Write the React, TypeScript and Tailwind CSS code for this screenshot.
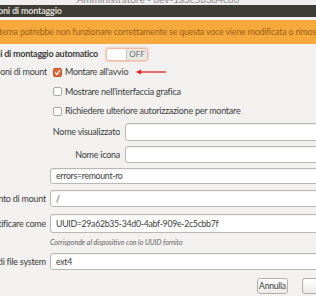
import React from "react";

// Mount options dialog (cropped view)
const font = { fontFamily: 'Lato, "Noto Sans", sans-serif' };

function Label({ text, w, bold }: { text: string; w: string; bold?: boolean }) {
  return (
    <div className={`${w} shrink-0 flex justify-end overflow-hidden`}>
      <span className={`shrink-0 whitespace-nowrap text-[9px] tracking-[-0.25px] text-[#3c3c3c] ${bold ? "font-bold" : ""}`}>
        {text}
      </span>
    </div>
  );
}

function Field({ value, h = "h-[17px]" }: { value?: string; h?: string }) {
  return (
    <div
      className={`flex-1 min-w-0 ${h} mr-[-20px] bg-white border border-[#b9b7b3] rounded-[3px] flex items-center pl-[5px] text-[8.75px] tracking-[-0.3px] text-[#3c3c3c] whitespace-nowrap shadow-[inset_0_1px_1px_rgba(0,0,0,0.06)]`}
    >
      {value}
    </div>
  );
}

function Check({ checked, label, arrow }: { checked?: boolean; label: string; arrow?: boolean }) {
  return (
    <div className="flex items-center gap-[3px] h-[16px]">
      <div
        className={`w-[9px] h-[9px] rounded-[2px] border flex items-center justify-center ${
          checked ? "bg-[#e0693c] border-[#c4532a]" : "bg-white border-[#a9a7a3]"
        }`}
      >
        {checked && (
          <svg width="7" height="7" viewBox="0 0 7 7">
            <path d="M1 3.6 L2.8 5.3 L6 1.4" stroke="white" strokeWidth="1.3" fill="none" />
          </svg>
        )}
      </div>
      <span className="text-[9px] tracking-[-0.25px] text-[#3c3c3c] whitespace-nowrap">{label}</span>
      {arrow && (
        <svg width="32" height="8" viewBox="0 0 32 8" className="ml-[4px]">
          <path d="M2 4 H31" stroke="#e52420" strokeWidth="1.3" />
          <path d="M1 4 L6 1.5 L6 6.5 Z" fill="#e52420" />
        </svg>
      )}
    </div>
  );
}

export default function App() {
  return (
    <div className="w-[316px] h-[296px] overflow-hidden bg-[#f2f1f0] flex flex-col" style={font}>
      {/* cut window above */}
      <div className="h-[5px] bg-[#efeeec] overflow-hidden flex justify-center">
        <span className="text-[10px] leading-[10px] mt-[-6px] text-[#8a8a8a] whitespace-nowrap">Amministratore - dev-1a3c5b3d4cd0</span>
      </div>
      {/* title bar */}
      <div className="h-[12px] bg-[#3d3c37] flex items-center">
        <span className="ml-[-2px] text-[9px] tracking-[-0.2px] font-bold text-[#dfdbd2] whitespace-nowrap">oni di montaggio</span>
      </div>
      <div className="h-[3px]" />
      {/* warning */}
      <div className="h-[24px] bg-[#f5a93d] flex items-center overflow-hidden">
        <span className="ml-[-1px] text-[9px] tracking-[-0.25px] text-[#a15f13] whitespace-nowrap">
          tema potrebbe non funzionare correttamente se questa voce viene modificata o rimossa.
        </span>
      </div>

      <div className="flex flex-col pt-[3px]">
        {/* automatic */}
        <div className="flex items-center h-[14px]">
          <Label text="Opzioni di montaggio automatico" w="w-[98px]" bold />
          <div className="ml-[8px] w-[42px] h-[13px] rounded-[3px] border border-[#f0b9a2] shadow-[0_0_1px_1px_rgba(240,150,110,0.35)] flex overflow-hidden">
            <div className="w-[20px] bg-white border-r border-[#c9c7c3] rounded-[2px]" />
            <div className="flex-1 bg-[#e9e8e5] flex items-center justify-center text-[8px] text-[#6a6a6a]">OFF</div>
          </div>
        </div>

        {/* checks */}
        <div className="flex mt-[3px]">
          <div className="pt-[1px]">
            <Label text="Opzioni di mount" w="w-[47px]" />
          </div>
          <div className="ml-[6px] flex flex-col gap-[3.5px]">
            <Check checked label="Montare all'avvio" arrow />
            <Check label="Mostrare nell'interfaccia grafica" />
            <Check label="Richiedere ulteriore autorizzazione per montare" />
          </div>
        </div>

        {/* names */}
        <div className="flex items-center mt-[4px] gap-[5px]">
          <Label text="Nome visualizzato" w="w-[120px]" />
          <Field h="h-[18px]" />
        </div>
        <div className="flex items-center mt-[5px] gap-[5px]">
          <Label text="Nome icona" w="w-[120px]" />
          <Field />
        </div>
        <div className="flex items-center mt-[5px] pl-[50px]">
          <Field value="errors=remount-ro" h="h-[16px]" />
        </div>

        <div className="flex items-center mt-[6px] gap-[4px]">
          <Label text="Punto di mount" w="w-[46px]" />
          <Field value="/" />
        </div>
        <div className="flex items-center mt-[7px] gap-[4px]">
          <Label text="Identificare come" w="w-[46px]" />
          <Field value="UUID=29a62b35-34d0-4abf-909e-2c5cbb7f" h="h-[19px]" />
        </div>
        <div className="pl-[50px] mt-[4px] h-[11px] flex items-center text-[7px] italic text-[#5f5f5f] whitespace-nowrap">
          Corrisponde al dispositivo con lo UUID fornito
        </div>
        <div className="flex items-center mt-[5px] gap-[4px]">
          <Label text="Tipo di file system" w="w-[46px]" />
          <Field value="ext4" />
        </div>

        {/* buttons */}
        <div className="flex justify-end mt-[8px] gap-[14px] mr-[-16px]">
          <div className="w-[31px] h-[16px] rounded-[3px] border border-[#b1afab] bg-gradient-to-b from-white to-[#ecebe9] flex items-center justify-center text-[8.5px] tracking-[-0.2px] text-[#3c3c3c]">
            Annulla
          </div>
          <div className="w-[30px] h-[16px] rounded-[3px] border border-[#b1afab] bg-gradient-to-b from-white to-[#ecebe9]" />
        </div>
      </div>
    </div>
  );
}
